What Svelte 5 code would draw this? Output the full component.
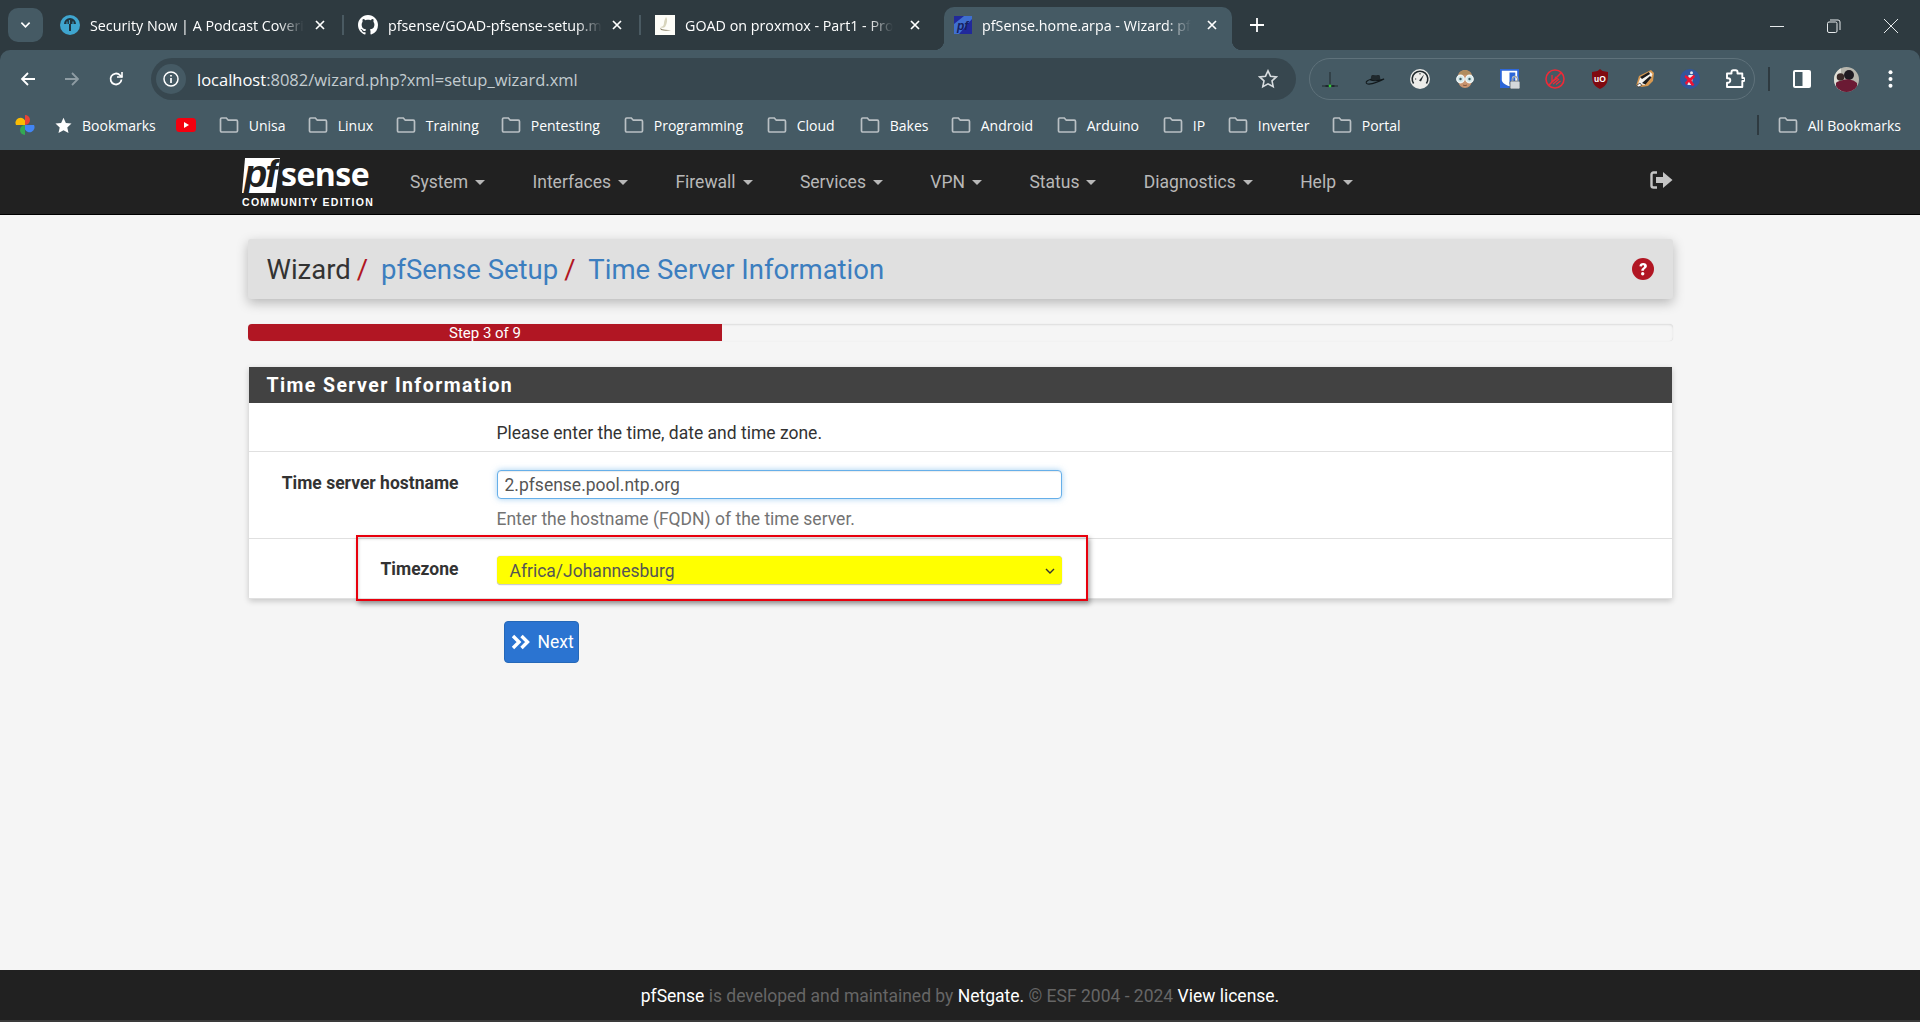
<script>
	// titles stop where the tab strip fades them out
	const tabs = [
		{ title: 'Security Now | A Podcast Coveri', width: 294, pad: 10, end: 19, icon: 'twit' },
		{ title: 'pfsense/GOAD-pfsense-setup.m', width: 297, pad: 14, end: 19, icon: 'github' },
		{ title: 'GOAD on proxmox - Part1 - Pro', width: 303, pad: 14, end: 24, icon: 'bird' },
		{ title: 'pfSense.home.arpa - Wizard: pf', width: 288, pad: 10, end: 15, icon: 'pf', active: true }
	];

	// widths hold each bookmark to its slot, folder left edge to next folder left edge
	const bookmarks = [
		{ name: 'Unisa', width: 89 },
		{ name: 'Linux', width: 88 },
		{ name: 'Training', width: 105 },
		{ name: 'Pentesting', width: 123 },
		{ name: 'Programming', width: 143 },
		{ name: 'Cloud', width: 93 },
		{ name: 'Bakes', width: 91 },
		{ name: 'Android', width: 106 },
		{ name: 'Arduino', width: 106 },
		{ name: 'IP', width: 65 },
		{ name: 'Inverter', width: 104 },
		{ name: 'Portal', width: 100 }
	];

	const menu = ['System', 'Interfaces', 'Firewall', 'Services', 'VPN', 'Status', 'Diagnostics', 'Help'];
</script>

{#snippet folder()}
	<svg class="folder" viewBox="0 0 20 18" width="20" height="18" fill="none" stroke="#b9c0c4" stroke-width="1.7">
		<path d="M1.5 3.2a1.2 1.2 0 0 1 1.2-1.2h4.6l2 2.2h8a1.2 1.2 0 0 1 1.2 1.2v9.4a1.2 1.2 0 0 1-1.2 1.2H2.700a1.2 1.2 0 0 1-1.2-1.200z" />
	</svg>
{/snippet}

{#snippet tabIcon(kind)}
	{#if kind === 'twit'}
		<svg viewBox="0 0 20 20" width="20" height="20">
			<circle cx="10" cy="10" r="10" fill="#3fa5cf" />
			<path d="M4 9a6 6 0 0 1 12 0h-5v7H9V9z" fill="#20333d" />
			<path d="M9.400 5v4M7 6.500v2.500M13 6.500v2.500" stroke="#3fa5cf" stroke-width="1" />
		</svg>
	{:else if kind === 'github'}
		<svg viewBox="0 0 16 16" width="20" height="20" fill="#fff">
			<path d="M8 0C3.580 0 0 3.580 0 8c0 3.540 2.290 6.530 5.470 7.590.4.070.55-.17.55-.38 0-.19-.01-.82-.01-1.490-2.010.37-2.530-.49-2.690-.94-.09-.23-.48-.94-.82-1.130-.28-.15-.68-.52-.01-.53.63-.01 1.080.58 1.230.82.720 1.210 1.870.87 2.330.66.070-.52.280-.87.510-1.070-1.780-.2-3.640-.89-3.640-3.950 0-.87.310-1.590.820-2.150-.08-.2-.36-1.020.08-2.120 0 0 .67-.21 2.200.82.640-.18 1.320-.27 2-.27s1.360.09 2 .27c1.530-1.040 2.200-.82 2.200-.82.440 1.100.160 1.920.080 2.120.510.560.820 1.270.820 2.150 0 3.070-1.870 3.750-3.650 3.950.290.250.540.730.540 1.480 0 1.070-.01 1.930-.01 2.200 0 .210.150.460.550.380A8.010 8.010 0 0 0 16 8c0-4.420-3.580-8-8-8z" />
		</svg>
	{:else if kind === 'bird'}
		<svg viewBox="0 0 20 20" width="20" height="20">
			<rect width="20" height="20" fill="#fdfdf8" />
			<path d="M11 2c2 2 1 7-1 10-1 1-4 1-5 0 2 0 4-1 4-4 0-2 1-4 2-6z" fill="#d8d5bd" />
			<path d="M5 13c3 2 7 2 11 2-3 1-7 1-10 0z" fill="#8a8268" />
		</svg>
	{:else}
		<svg viewBox="0 0 18 18" width="18" height="18">
			<rect width="18" height="18" fill="#21299a" />
			<path d="M0 18V8L10 0h8v3L5 18z" fill="#3f6fd0" />
			<text x="3" y="14" font-size="12" font-style="italic" font-weight="700" font-family="'Liberation Sans', sans-serif" fill="#16205f">pf</text>
		</svg>
	{/if}
{/snippet}

<div class="page">
	<header class="chrome">
		<div class="strip">
			<button class="tab-search" aria-label="Search tabs">
				<svg viewBox="0 0 12 8" width="11" height="8" fill="none" stroke="#fff" stroke-width="1.800"><path d="M1.500 1.500 6 6l4.500-4.500" /></svg>
			</button>
			<div class="tabs">
				{#each tabs as tab, i}
					<div class="tab" class:active={tab.active} style="width: {tab.width}px; padding-left: {tab.pad}px; padding-right: {tab.end}px">
						{@render tabIcon(tab.icon)}
						<span class="tab-title">{tab.title}</span>
						<svg class="tab-close" viewBox="0 0 10 10" width="10" height="10" stroke="#fff" stroke-width="1.700"><path d="M1 1l8 8M9 1l-8 8" /></svg>
						{#if i < 2}<i class="tab-sep"></i>{/if}
					</div>
				{/each}
			</div>
			<svg class="new-tab" viewBox="0 0 14 14" width="14" height="14" stroke="#fff" stroke-width="1.800"><path d="M7 0v14M0 7h14" /></svg>
			<div class="window-btns">
				<svg viewBox="0 0 14 14" width="14" height="14" stroke="#e6eaec" stroke-width="1"><path d="M0 7.500h14" /></svg>
				<svg viewBox="0 0 14 14" width="14" height="14" fill="none" stroke="#e6eaec" stroke-width="1"><rect x=".5" y="3" width="9.500" height="10.500" rx="1.500" /><path d="M3 1h8a2 2 0 0 1 2 2v8" /></svg>
				<svg viewBox="0 0 14 14" width="14" height="14" stroke="#e6eaec" stroke-width="1"><path d="M0 0l14 14M14 0L0 14" /></svg>
			</div>
		</div>

		<div class="toolbar">
			<div class="nav-btns">
				<svg viewBox="0 0 16 16" width="16" height="16" fill="none" stroke="#fff" stroke-width="1.800"><path d="M15 8H2M8 2 2 8l6 6" /></svg>
				<svg viewBox="0 0 16 16" width="16" height="16" fill="none" stroke="#8e9ca3" stroke-width="1.800"><path d="M1 8h13M8 2l6 6-6 6" /></svg>
				<svg viewBox="0 0 16 16" width="16" height="16" fill="none" stroke="#fff" stroke-width="1.800"><path d="M13.500 8.500a5.500 5.500 0 1 1-1.600-4.400L14 6" /><path d="M14 1v5H9" stroke-width="1.600" /></svg>
			</div>
			<div class="omnibox">
				<span class="info-chip">
					<svg viewBox="0 0 16 16" width="16" height="16" fill="none" stroke="#fff" stroke-width="1.500"><circle cx="8" cy="8" r="7" /><path d="M8 7v5M8 4v1.600" stroke-width="1.700" /></svg>
				</span>
				<span class="url"><b>localhost</b>:8082/wizard.php?xml=setup_wizard.xml</span>
				<svg class="star" viewBox="0 0 20 20" width="20" height="20" fill="none" stroke="#d7dcdf" stroke-width="1.600"><path d="M10 1.800l2.500 5.400 5.800.7-4.300 4 1.200 5.800L10 14.800l-5.200 2.900L6 11.900l-4.300-4 5.800-.7z" /></svg>
			</div>
			<div class="extensions">
				<!-- antenna -->
				<svg viewBox="0 0 20 20"><path d="M10 3v14" stroke="#20292d" stroke-width="1" /><path d="M2 17h16" stroke="#20292d" stroke-width="1" /><path d="M5.500 17h9" stroke="#1a2327" stroke-width="1.600" /><circle cx="10" cy="17" r="1.400" fill="#35c83a" /></svg>
				<!-- hat -->
				<svg viewBox="0 0 22 20"><path d="M6 12l.8-5c.2-1.200 1.500-1.700 3-1.300 1.500.3 2.700.3 4 0 1.500-.4 2.500 0 2.600 1.200l.6 4z" fill="#20292d" /><path d="M6 10.500c-3 .8-5.200 2.400-4.600 3.800.6 1.300 3.600 1.500 6.600.8 4-.9 8-2.600 13-5-3 .6-5 1.400-7.500 1.700-3 .3-5.500.2-7.500-1.300z" fill="none" stroke="#11181b" stroke-width="1.200" /></svg>
				<!-- speed gauge -->
				<svg viewBox="0 0 20 20"><circle cx="10" cy="10" r="10" fill="#ecece9" /><path d="M3.600 14.500a7.800 7.800 0 1 1 12.800 0" fill="none" stroke="#20292d" stroke-width="1.600" /><path d="M9 11.500l5-6-3 7z" fill="#20292d" /><path d="M10 4v1.500M5 10h1.200" stroke="#20292d" stroke-width="1" /></svg>
				<!-- face with glasses -->
				<svg viewBox="0 0 20 20"><path d="M3 8c0-5 3.500-7 7-7s7 2 7 7v3c0 5-3.500 8-7 8s-7-3-7-8z" fill="#c9946f" /><path d="M3 7c1.500-4.500 4-5.800 7-5.800S15.500 2.500 17 7c-4.500-1.700-9.500-1.700-14 0z" fill="#b08c5e" /><circle cx="5.500" cy="10" r="3.700" fill="#cfe6e8" stroke="#f1f5f5" stroke-width="1.400" /><circle cx="14.500" cy="10" r="3.700" fill="#cfe6e8" stroke="#f1f5f5" stroke-width="1.400" /><circle cx="5.500" cy="10" r="1.200" fill="#3c5860" /><circle cx="14.500" cy="10" r="1.200" fill="#3c5860" /><path d="M8 16c1.300.7 2.700.7 4 0" stroke="#8a5a40" stroke-width="1" fill="none" /></svg>
				<!-- password manager with lock -->
				<svg viewBox="0 0 20 20"><rect width="19" height="19" fill="#2d66d8" /><path d="M1.800 1.800h15.400V11c0 2.500-3 4.800-7.700 6.300C5 15.800 1.800 13.500 1.800 11z" fill="#fff" /><path d="M9.500 3.600h5.800V11c0 1.700-2.500 3.300-5.800 4.400z" fill="#2d66d8" /><rect x="10" y="12" width="10" height="8" rx="1.500" fill="#d5d8da" stroke="#4e5c63" stroke-width=".8" /><path d="M12.500 12v-2a2.500 2.500 0 0 1 5 0v2" fill="none" stroke="#d5d8da" stroke-width="1.500" /><path d="M12.500 12v-2a2.500 2.500 0 0 1 5 0v2" fill="none" stroke="#4e5c63" stroke-width=".5" /></svg>
				<!-- blocked video -->
				<svg viewBox="0 0 20 20" fill="none" stroke="#ee2a37" stroke-width="1.600"><circle cx="10" cy="10" r="9" /><path d="M3.800 16.200 16.200 3.800" /><path d="M7 6v6.500l5-3-2-1.500" stroke-width="1.300" /><path d="M8 15l6-5M11 15.500l4.500-3.500" stroke-width="1.300" /></svg>
				<!-- shield -->
				<svg viewBox="0 0 18 20"><path d="M9 0l2.500 2 5.500 1c0 9 0 13-8 17C1 16 1 12 1 3l5.500-1z" fill="#800a10" /><text x="9" y="12.500" text-anchor="middle" font-size="8.500" font-weight="700" font-family="'Liberation Sans', sans-serif" fill="#fff">uO</text></svg>
				<!-- badger -->
				<svg viewBox="0 0 20 20"><path d="M1 17 4 7l12-6 3 3-1 8-5 5-7 1z" fill="#d8984f" /><path d="M3 15l2.500-7L15 3l2.500 2-2 5-6 6z" fill="#f5f3ee" /><path d="M5 8l9-5 1 2-8 5zM7 14l8-7 1.500 1.500-6 7z" fill="#1c1c1c" /><path d="M1.500 16.500 5 14l1.800 2.500-3 1.500z" fill="#fff" stroke="#222" stroke-width=".7" /></svg>
				<!-- blue circle, red cross -->
				<svg viewBox="0 0 20 20"><circle cx="10" cy="10" r="10" fill="#31559c" /><circle cx="11.500" cy="3.800" r="1.500" fill="#e6e9f0" /><path d="M8.500 6h5l-2 10H7.500z" fill="#e6e9f0" /><path d="M5.500 6l4.500 3 4-3.500 1 2.500-3.500 3.500 3 4.500-2.500 1-3-4-3 3-1-2.500 2.500-2.500-3-3z" fill="#ef1133" /></svg>
				<!-- puzzle piece -->
				<svg viewBox="0 0 20 20" fill="none" stroke="#fff" stroke-width="1.900" stroke-linejoin="round"><path d="M2 4.500h4.500V3a1.800 1.800 0 0 1 1.800-1.800h2.400A1.800 1.800 0 0 1 12.500 3v1.500h4.800V9h1.200a1 1 0 0 1 0 3h-1.200v6H2v-4.200h1a2.300 2.300 0 0 0 0-4.600H2z" /></svg>
			</div>
			<i class="tool-sep"></i>
			<div class="profile-btns">
				<svg viewBox="0 0 18 18" width="18" height="18"><rect width="18" height="18" rx="2" fill="#fff" /><rect x="2" y="2" width="7.500" height="14" fill="#455a64" /></svg>
				<svg class="avatar" viewBox="0 0 25 25" width="25" height="25">
					<defs><clipPath id="avatar-clip"><circle cx="12.500" cy="12.500" r="12.500" /></clipPath></defs>
					<g clip-path="url(#avatar-clip)">
						<rect width="25" height="25" fill="#b6b5ac" />
						<rect width="7" height="25" fill="#e0dfd6" />
						<circle cx="6.500" cy="10" r="3.800" fill="#3a2a28" />
						<circle cx="15" cy="8" r="5" fill="#1e1a20" />
						<path d="M2 25v-9c1-1.500 3-2 5-2 2-1 5-2 8-1.500 3 .3 6 1.500 8 3.500v9z" fill="#6b1a34" />
					</g>
				</svg>
				<svg class="dots" viewBox="0 0 5 18" width="5" height="18" fill="#fff"><circle cx="2.500" cy="2.200" r="2" /><circle cx="2.500" cy="9" r="2" /><circle cx="2.500" cy="15.800" r="2" /></svg>
			</div>
		</div>

		<div class="bookmarks">
			<svg class="pinwheel" viewBox="0 0 20 20" width="20" height="20">
				<path d="M10 10H1a4.500 4.500 0 0 1 9-4.500z" fill="#fbbc04" />
				<path d="M10 10V0a5 5 0 0 1 0 10z" fill="#ea4335" />
				<path d="M10 10h9a4.500 4.500 0 0 1-9 4.500z" fill="#4285f4" />
				<path d="M10 10v10a5 5 0 0 1 0-10z" fill="#34a853" />
			</svg>
			<span class="bm-main">
				<svg viewBox="0 0 18 18" width="17" height="17" fill="#fff"><path d="M9 .8l2.500 5.600 6 .6-4.500 4 1.300 6L9 14l-5.300 3 1.300-6-4.500-4 6-.6z" /></svg>
				<span>Bookmarks</span>
			</span>
			<svg class="yt" viewBox="0 0 20 14" width="20" height="14"><rect width="20" height="14" rx="3.500" fill="#f4000f" /><path d="M8 4l5 3-5 3z" fill="#fff" /></svg>
			{#each bookmarks as b}
				<span class="bm" style="width: {b.width}px">{@render folder()}<span>{b.name}</span></span>
			{/each}
			<i class="bm-sep"></i>
			<span class="bm bm-all">{@render folder()}<span>All Bookmarks</span></span>
		</div>
	</header>

	<nav class="topnav">
		<div class="logo">
			<div class="logo-mark">
				<span class="logo-box"><em>pf</em></span>
				<span class="logo-word">sense</span>
			</div>
			<div class="logo-sub">COMMUNITY EDITION</div>
		</div>
		<ul class="menu">
			{#each menu as item}
				<li>{item}<i class="caret"></i></li>
			{/each}
		</ul>
		<svg class="logout" viewBox="0 0 23 18" width="23" height="18">
			<path d="M7 1.500H3.500A2 2 0 0 0 1.500 3.500v11a2 2 0 0 0 2 2H7" fill="none" stroke="#c4c4c4" stroke-width="2.400" />
			<path d="M6 6h7V1l9.500 8-9.500 8v-5H6z" fill="#c4c4c4" />
		</svg>
	</nav>

	<main class="content">
		<div class="crumbs">
			<h1>
				<span class="crumb-root">Wizard</span><span class="slash">/</span>
				<a href="#setup">pfSense Setup</a><span class="slash">/</span>
				<a href="#time">Time Server Information</a>
			</h1>
			<svg viewBox="0 0 22 22" width="22" height="22">
				<circle cx="11" cy="11" r="11" fill="#b11623" />
				<path d="M7.400 8.200c.2-2 1.700-3.100 3.800-3.100 2.200 0 3.700 1.200 3.700 3 0 2.600-3 2.600-3 4.600H9.300c0-3 2.800-3 2.800-4.500 0-.7-.4-1-1-1-.7 0-1 .4-1.200 1.300z" fill="#fff" />
				<circle cx="10.700" cy="15.800" r="1.700" fill="#fff" />
			</svg>
		</div>

		<div class="progress">
			<div class="progress-fill" style="width: 33.33%">Step 3 of 9</div>
		</div>

		<section class="panel">
			<h2>Time Server Information</h2>
			<div class="row row-intro">
				<span class="field-text">Please enter the time, date and time zone.</span>
			</div>
			<div class="row row-host">
				<label for="ntp">Time server hostname</label>
				<div class="field">
					<input id="ntp" type="text" value="2.pfsense.pool.ntp.org" />
					<span class="help">Enter the hostname (FQDN) of the time server.</span>
				</div>
			</div>
			<div class="row row-zone">
				<label for="tz">Timezone</label>
				<div class="field">
					<div id="tz" class="select">
						<span>Africa/Johannesburg</span>
						<svg viewBox="0 0 10 7" width="10" height="7" fill="none" stroke="#333" stroke-width="1.400"><path d="M1 1l4 4 4-4" /></svg>
					</div>
				</div>
			</div>
			<div class="callout"></div>
		</section>

		<button class="next">
			<svg viewBox="0 0 20 16" width="20" height="18" fill="none" stroke="#fff" stroke-width="3.400"><path d="M2 2l6 6-6 6M10.500 2l6 6-6 6" /></svg>
			Next
		</button>
	</main>

	<footer class="foot">
		<b>pfSense</b> is developed and maintained by <b>Netgate.</b> © ESF 2004 - 2024 <b>View license.</b>
	</footer>
</div>

<style>
	:global(body) {
		background: #f5f5f5;
	}

	.page {
		display: flex;
		flex-direction: column;
		height: 1022px;
		overflow: hidden;
		font-family: Roboto, sans-serif;
	}

	svg {
		flex: none;
		display: block;
	}

	/* browser chrome */
	.chrome {
		background: #2e3a40;
		font-family: 'Open Sans', sans-serif;
		color: #fff;
	}

	.strip {
		display: flex;
		align-items: flex-end;
		height: 50px;
		padding-left: 8px;
	}

	.tab-search {
		display: flex;
		align-items: center;
		justify-content: center;
		width: 35px;
		height: 34px;
		margin: 0 7px 8px 0;
		padding: 0;
		border: 0;
		border-radius: 10px;
		background: #455a64;
	}

	.tabs {
		display: flex;
		height: 43px;
	}

	.tab {
		position: relative;
		display: flex;
		align-items: center;
		gap: 10px;
		box-sizing: border-box;
		height: 43px;
		padding-bottom: 7px;
		font-size: 14.300px;
	}

	.tab.active {
		background: #455a64;
		border-radius: 10px 10px 0 0;
	}

	.tab.active::before,
	.tab.active::after {
		content: '';
		position: absolute;
		bottom: 0;
		width: 10px;
		height: 10px;
	}

	.tab.active::before {
		left: -10px;
		background: radial-gradient(circle at 0 0, transparent 10px, #455a64 10.500px);
	}

	.tab.active::after {
		right: -10px;
		background: radial-gradient(circle at 100% 0, transparent 10px, #455a64 10.500px);
	}

	.tab-title {
		white-space: nowrap;
		-webkit-mask-image: linear-gradient(90deg, #000 88%, transparent 100%);
		mask-image: linear-gradient(90deg, #000 88%, transparent 100%);
	}

	.tab-close {
		margin-left: auto;
	}

	.tab-sep {
		position: absolute;
		right: 0;
		top: 8px;
		width: 2px;
		height: 20px;
		background: #4a5a62;
	}

	.new-tab {
		margin: 0 0 18px 18px;
	}

	.window-btns {
		display: flex;
		gap: 43px;
		margin: 0 22px 17px auto;
	}

	.toolbar {
		display: flex;
		align-items: center;
		height: 50px;
		padding: 8px 0 0 6px;
		box-sizing: border-box;
		background: #455a64;
		border-radius: 10px 10px 0 0;
	}

	.nav-btns {
		display: flex;
		align-items: center;
		gap: 28px;
		width: 145px;
		padding-left: 14px;
		box-sizing: border-box;
	}

	.omnibox {
		display: flex;
		align-items: center;
		width: 1145px;
		height: 42px;
		box-sizing: border-box;
		padding: 0 18px 0 5px;
		border-radius: 21px;
		background: #37474f;
	}

	.info-chip {
		display: flex;
		align-items: center;
		justify-content: center;
		width: 30px;
		height: 30px;
		border-radius: 50%;
		background: #455a64;
	}

	.url {
		flex: 1;
		margin-left: 11px;
		font-size: 16.500px;
		color: #c3ccd0;
		white-space: nowrap;
	}

	.url b {
		font-weight: 400;
		color: #fff;
	}

	.extensions {
		display: flex;
		align-items: center;
		justify-content: space-between;
		width: 446px;
		height: 42px;
		box-sizing: border-box;
		margin-left: 13px;
		padding: 0 9px 0 10px;
		border: 1px solid #5f727b;
		border-radius: 21px;
	}

	.extensions svg {
		width: 20px;
		height: 20px;
	}

	.tool-sep {
		width: 2px;
		height: 24px;
		margin-left: 13px;
		background: #2e3a40;
	}

	.profile-btns {
		display: flex;
		align-items: center;
		gap: 23px;
		margin-left: 23px;
	}

	.dots {
		margin-left: 6px;
	}

	.bookmarks {
		display: flex;
		align-items: center;
		height: 50px;
		box-sizing: border-box;
		padding: 0 19px 0 15px;
		background: #455a64;
		font-size: 14px;
	}

	.bm-main {
		display: flex;
		align-items: center;
		gap: 10px;
		margin-left: 20px;
	}

	.yt {
		margin: 0 23px 0 20px;
	}

	.bm {
		display: flex;
		align-items: center;
		gap: 10px;
		flex: none;
		white-space: nowrap;
	}

	.bm-sep {
		width: 2px;
		height: 20px;
		margin-left: auto;
		background: #2e3a40;
	}

	.bm-all {
		margin-left: 19px;
	}

	/* pfSense page */
	.topnav {
		display: flex;
		align-items: center;
		height: 65px;
		box-sizing: border-box;
		padding: 0 247px 0 242px;
		background: #212121;
		border-bottom: 1px solid #000;
	}

	.logo {
		width: 132px;
		margin-top: 2px;
		color: #fff;
	}

	.logo-mark {
		display: flex;
		align-items: flex-end;
		height: 35px;
	}

	.logo-box {
		display: block;
		width: 38px;
		height: 35px;
		background: #fff;
		clip-path: polygon(8% 0, 100% 0, 88% 100%, 0 100%);
	}

	.logo-box em {
		display: block;
		margin: -5px 0 0 2px;
		font: italic 700 38px/42px 'Liberation Sans', sans-serif;
		letter-spacing: -2px;
		color: #212121;
	}

	.logo-word {
		margin-left: 1px;
		font: 700 32px/38px 'Open Sans', sans-serif;
		letter-spacing: -0.5px;
	}

	.logo-sub {
		margin-top: 4px;
		font: 700 10.500px/11px 'Liberation Sans', sans-serif;
		letter-spacing: 1.300px;
		white-space: nowrap;
	}

	.menu {
		display: flex;
		flex: 1;
		gap: 47.400px;
		margin: 0 0 0 36px;
		padding: 0;
		list-style: none;
		font-size: 17.500px;
		color: #b8b8b8;
	}

	.menu li {
		display: flex;
		align-items: center;
	}

	.caret {
		width: 0;
		height: 0;
		margin-left: 7px;
		border-top: 5px solid #b8b8b8;
		border-left: 5px solid transparent;
		border-right: 5px solid transparent;
	}

	.logout {
		margin-top: -5px;
	}

	.content {
		flex: 1;
		width: 1425px;
		margin: 0 auto;
		padding-top: 24px;
	}

	.crumbs {
		display: flex;
		align-items: center;
		justify-content: space-between;
		height: 60px;
		box-sizing: border-box;
		padding: 0 19px;
		background: #e0e0e0;
		border-radius: 3px;
		box-shadow: 0 4px 12px rgba(0, 0, 0, 0.25);
	}

	.crumbs h1 {
		margin: 0;
		font-size: 27.500px;
		font-weight: 400;
		color: #333;
	}

	.crumbs a {
		color: #3c7ebf;
		text-decoration: none;
		margin-left: 6px;
	}

	.slash {
		margin-left: 6px;
		color: #b11623;
	}

	.progress {
		height: 17px;
		margin-top: 25px;
		overflow: hidden;
		background: #f5f5f5;
		border-radius: 4px;
		box-shadow: inset 0 1px 2px rgba(0, 0, 0, 0.1), 0 0 1px rgba(0, 0, 0, 0.15);
	}

	.progress-fill {
		height: 17px;
		background: #b11623;
		color: #fff;
		font-size: 15px;
		line-height: 18px;
		text-align: center;
	}

	.panel {
		position: relative;
		margin: 26px 1px 0;
		background: #fff;
		box-shadow: 0 2px 6px rgba(0, 0, 0, 0.2);
	}

	.panel h2 {
		margin: 0;
		height: 36px;
		padding: 0 18px;
		background: #424242;
		color: #fff;
		font-size: 19.500px;
		font-weight: 700;
		line-height: 37px;
		letter-spacing: 1.400px;
	}

	.row {
		display: flex;
		box-sizing: border-box;
		border-bottom: 1px solid #e0e0e0;
		font-size: 17.500px;
	}

	.row:last-of-type {
		border-bottom: 0;
	}

	.row-intro {
		align-items: center;
		height: 49px;
		padding-left: 248px;
		padding-top: 11px;
	}

	.field-text {
		color: #333;
	}

	.row-host {
		height: 87px;
		padding-top: 18px;
	}

	.row-zone {
		height: 60px;
		padding-top: 17px;
	}

	.row label {
		width: 210px;
		text-align: right;
		font-weight: 700;
		color: #333;
		line-height: 26px;
	}

	.row-zone label {
		line-height: 26px;
	}

	.field {
		display: flex;
		flex-direction: column;
		width: 565px;
		margin-left: 38px;
	}

	input {
		width: 565px;
		height: 29px;
		box-sizing: border-box;
		padding: 0 7px;
		border: 1px solid #66afe9;
		border-radius: 4px;
		box-shadow: 0 0 6px rgba(102, 175, 233, 0.6), inset 0 1px 1px rgba(0, 0, 0, 0.08);
		font: 400 17.500px Roboto, sans-serif;
		color: #555;
		outline: none;
	}

	.help {
		margin-top: 8px;
		color: #737373;
		line-height: 24px;
	}

	.select {
		display: flex;
		align-items: center;
		justify-content: space-between;
		height: 29px;
		box-sizing: border-box;
		padding: 2px 7px 0 13px;
		background: #ff0;
		border-radius: 4px;
		border-bottom: 1px solid #ccc;
		box-shadow: 0 0 1px rgba(0, 0, 0, 0.35);
		color: #555;
	}

	/* red box drawn over the timezone row in the screenshot */
	.callout {
		position: absolute;
		left: 107px;
		top: 168px;
		width: 732px;
		height: 66px;
		box-sizing: border-box;
		border: 2px solid #e8000d;
		box-shadow: 2px 3px 5px rgba(0, 0, 0, 0.35), inset 1px 2px 3px rgba(0, 0, 0, 0.15);
	}

	.next {
		display: flex;
		align-items: center;
		gap: 7px;
		width: 75px;
		height: 42px;
		margin: 22px 0 0 256px;
		padding: 0 0 0 6px;
		box-sizing: border-box;
		border: 1px solid #2568b8;
		border-radius: 4px;
		background: #2b74d1;
		color: #fff;
		font: 400 17.500px Roboto, sans-serif;
	}

	.foot {
		height: 52px;
		box-sizing: border-box;
		padding-top: 15px;
		background: #212121;
		border-bottom: 2px solid #3a3a3a;
		color: #666;
		font-size: 17.500px;
		line-height: 22px;
		text-align: center;
	}

	.foot b {
		font-weight: 400;
		color: #fff;
	}
</style>
